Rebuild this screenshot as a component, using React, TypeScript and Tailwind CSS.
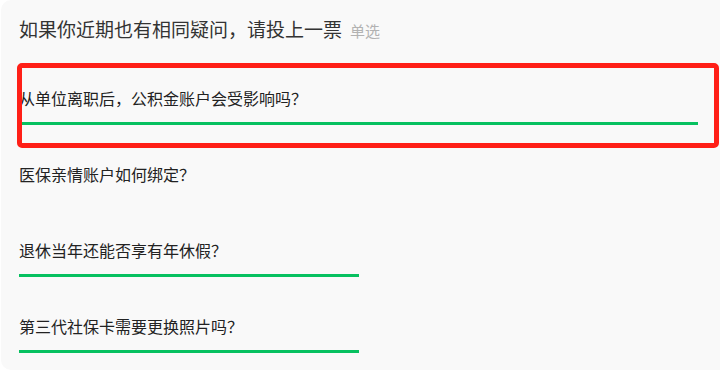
import React from 'react';

const options = [
  { label: '从单位离职后，公积金账户会受影响吗？', pct: 100 },
  { label: '医保亲情账户如何绑定？', pct: 0 },
  { label: '退休当年还能否享有年休假？', pct: 50 },
  { label: '第三代社保卡需要更换照片吗？', pct: 50 },
];

const App = () => {
  return (
    <div
      className="relative w-[720px] h-[372px] overflow-hidden bg-white"
      style={{ fontFamily: '"Noto Sans CJK SC", "Noto Sans", sans-serif' }}
    >
      <div className="ml-px w-[740px] h-[370px] rounded-[10px] bg-[#f9f9f9] pl-[18px]">
        <div className="pt-[15px] flex items-baseline h-[43px]">
          <span className="text-[19px] leading-[28px] text-[#333]">如果你近期也有相同疑问，请投上一票</span>
          <span className="ml-[8px] text-[15px] text-[#b2b2b2]">单选</span>
        </div>

        <div className="mt-[44px] w-[679px]">
          {options.map((opt) => (
            <div key={opt.label} className="h-[76px] flex flex-col">
              <div className="text-[16px] leading-[22px] text-[#222]">{opt.label}</div>
              <div className="mt-[13px] h-[3px]">
                {opt.pct > 0 && (
                  <div className="h-[3px] bg-[#07c160]" style={{ width: `${opt.pct}%` }} />
                )}
              </div>
            </div>
          ))}
        </div>
      </div>

      {/* annotation box */}
      <div className="absolute left-[17px] top-[63px] w-[702px] h-[85px] border-[5px] border-[#ff1f17] rounded-[5px]" />
    </div>
  );
};

export default App;
